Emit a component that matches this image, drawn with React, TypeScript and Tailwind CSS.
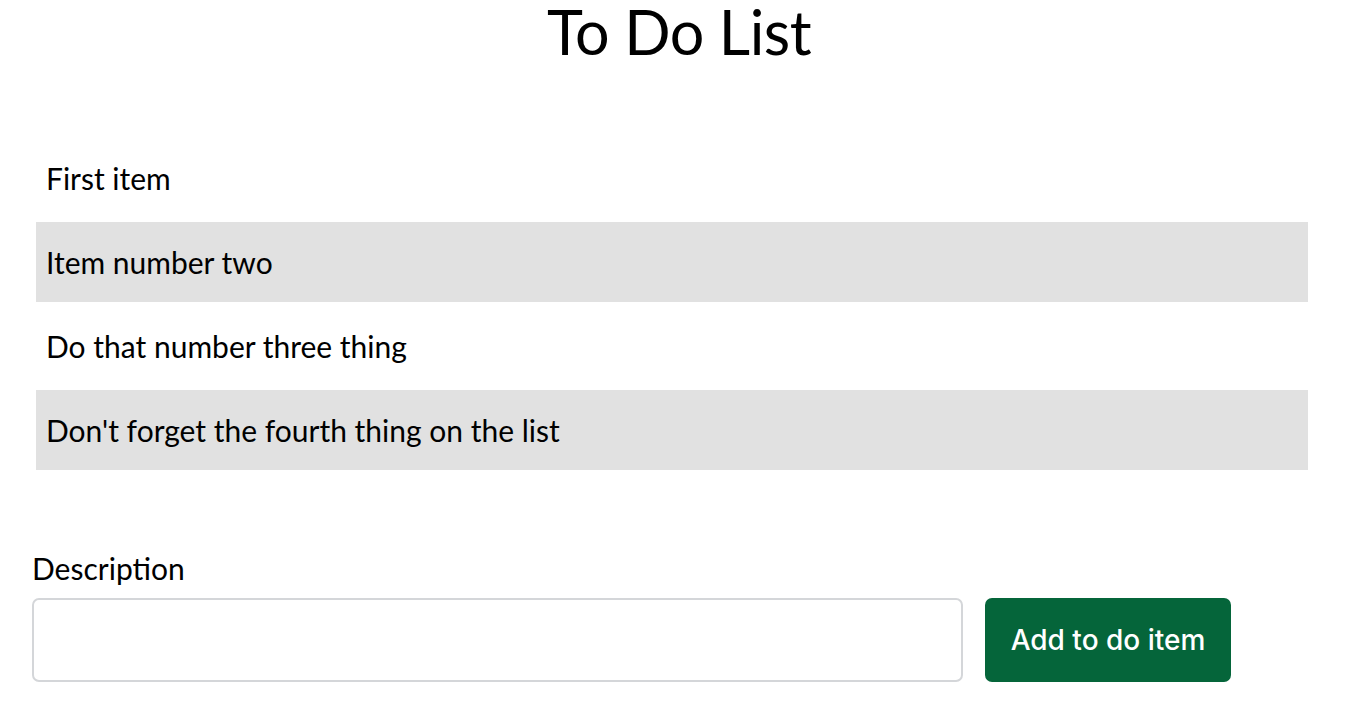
import React, { useState } from 'react';

const items = [
  'First item',
  'Item number two',
  'Do that number three thing',
  "Don't forget the fourth thing on the list",
];

const App: React.FC = () => {
  const [description, setDescription] = useState('');

  return (
    <div className="min-h-screen bg-white text-black font-['Lato','Noto_Sans',sans-serif]">
      {/* Header */}
      <h1 className="text-center text-[61px] leading-[64px] font-normal tracking-[-0.5px]">To Do List</h1>

      {/* List */}
      <ul className="ml-[36px] w-[1272px] mt-[74px] flex flex-col gap-[4px]">
        {items.map((item, i) => (
          <li
            key={item}
            className={`h-[80px] flex items-center pl-[10px] text-[30px] ${i % 2 === 1 ? 'bg-[#e1e1e1]' : ''}`}
          >
            {item}
          </li>
        ))}
      </ul>

      {/* Form */}
      <div className="mx-[32px] mt-[83px]">
        <label className="block text-[30px] leading-none mb-[15px]">Description</label>
        <div className="flex gap-[22px]">
          <input
            value={description}
            onChange={(e) => setDescription(e.target.value)}
            className="w-[931px] h-[84px] border-2 border-[#d4d6d9] rounded-[7px] px-3 text-[28px] outline-none"
          />
          <button className="w-[246px] h-[84px] bg-[#05653a] text-white rounded-[7px] text-[28px] font-medium font-['Inter',sans-serif]">
            Add to do item
          </button>
        </div>
      </div>
    </div>
  );
};

export default App;
